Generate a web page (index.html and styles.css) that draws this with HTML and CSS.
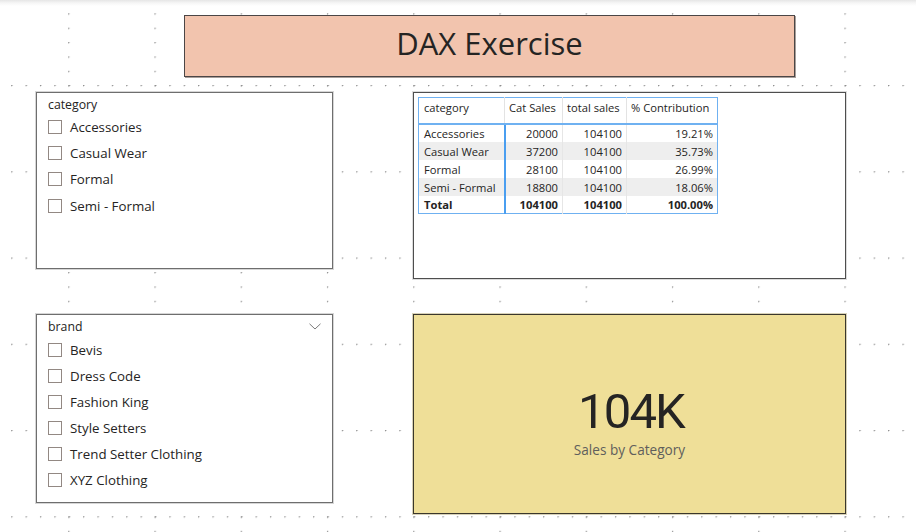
FILE: index.html
```html
<!DOCTYPE html>
<html>
<head>
<meta charset="utf-8">
<link rel="stylesheet" href="styles.css">
</head>
<body>
<div class="canvas">
  <div class="title-row">
    <div class="title">DAX Exercise</div>
  </div>

  <div class="row row-2">
    <div class="slicer slicer-category">
      <div class="slicer-head"><span>category</span></div>
      <ul class="items">
        <li><span class="cb"></span>Accessories</li>
        <li><span class="cb"></span>Casual Wear</li>
        <li><span class="cb"></span>Formal</li>
        <li><span class="cb"></span>Semi - Formal</li>
      </ul>
    </div>

    <div class="visual table-visual">
      <table class="matrix">
        <colgroup>
          <col class="c1"><col class="c2"><col class="c3"><col class="c4">
        </colgroup>
        <thead>
          <tr><th class="l">category</th><th>Cat Sales</th><th>total sales</th><th>% Contribution</th></tr>
        </thead>
        <tbody>
          <tr><td class="l">Accessories</td><td class="sep">20000</td><td>104100</td><td>19.21%</td></tr>
          <tr class="alt"><td class="l">Casual Wear</td><td class="sep">37200</td><td>104100</td><td>35.73%</td></tr>
          <tr><td class="l">Formal</td><td class="sep">28100</td><td>104100</td><td>26.99%</td></tr>
          <tr class="alt"><td class="l">Semi - Formal</td><td class="sep">18800</td><td>104100</td><td>18.06%</td></tr>
          <tr class="total"><td class="l">Total</td><td class="sep">104100</td><td>104100</td><td>100.00%</td></tr>
        </tbody>
      </table>
    </div>
  </div>

  <div class="row row-3">
    <div class="slicer slicer-brand">
      <div class="slicer-head"><span>brand</span>
        <svg class="chev" width="12" height="7" viewBox="0 0 12 7"><path d="M0.5 0.8 L6 6 L11.5 0.8" fill="none" stroke="#7a7a7a" stroke-width="1"/></svg>
      </div>
      <ul class="items">
        <li><span class="cb"></span>Bevis</li>
        <li><span class="cb"></span>Dress Code</li>
        <li><span class="cb"></span>Fashion King</li>
        <li><span class="cb"></span>Style Setters</li>
        <li><span class="cb"></span>Trend Setter Clothing</li>
        <li><span class="cb"></span>XYZ Clothing</li>
      </ul>
    </div>

    <div class="visual card">
      <div class="card-value">104K</div>
      <div class="card-label">Sales by Category</div>
    </div>
  </div>
</div>
</body>
</html>
```

FILE: styles.css
```css
* { box-sizing: border-box; }
html, body { margin: 0; padding: 0; background: #fff; }
body {
  font-family: "Open Sans", "Noto Sans", sans-serif;
  color: #252423;
}
.canvas {
  width: 916px;
  height: 532px;
  overflow: hidden;
  padding-top: 15px;
  display: flex;
  flex-direction: column;
  background-color: #fff;
  background-image:
    linear-gradient(to bottom, #e6e6e6 0px, #f6f6f6 3px, rgba(255,255,255,0) 6px),
    radial-gradient(circle at 0.5px 0.5px, #8c8c8c 0.7px, rgba(140,140,140,0) 1.1px),
    radial-gradient(circle at 0.5px 0.5px, #8c8c8c 0.7px, rgba(140,140,140,0) 1.1px);
  background-size: 916px 6px, 14.375px 86.25px, 86.25px 14.375px;
  background-repeat: no-repeat, repeat, repeat;
  background-position: 0 0, 11.2px 85px, 68.2px 13.3px;
}
.title-row { display: flex; padding-left: 184px; }
.title {
  width: 611px;
  height: 62px;
  background: #f2c4ae;
  border: 1px solid #4b4646;
  box-shadow: 1px 1px 0 #a89f9b;
  display: flex;
  align-items: center;
  justify-content: center;
  font-size: 31px;
  color: #252423;
  padding-bottom: 6px;
}
.row { display: flex; padding-left: 36px; gap: 80px; align-items: flex-start; }
.row-2 { margin-top: 15px; }
.row-3 { margin-top: 35px; }

.slicer {
  width: 297px;
  background: #fff;
  border: 1px solid #6e6e6e;
  box-shadow: 0 0 0 1px #d6d6d6;
  padding: 3px 11px 0 11px;
}
.slicer-category { height: 177px; }
.slicer-brand { height: 189px; }
.slicer-head {
  height: 18px;
  font-size: 12.3px;
  line-height: 18px;
  display: flex;
  justify-content: space-between;
  align-items: center;
}
.chev { margin-right: 0px; margin-top: -2px; }
.items { list-style: none; margin: 1px 0 0 0; padding: 0; }
.items li {
  height: 26.3px;
  display: flex;
  align-items: center;
  font-size: 13.3px;
  padding-bottom: 3px;
}
.slicer-brand .items { margin-top: 2px; }
.slicer-brand .items li { height: 26px; }
.cb {
  width: 14px;
  height: 14px;
  border: 1px solid #928883;
  margin-right: 8px;
  flex: none;
  background: #fff;
}

.visual {
  width: 433px;
  border: 1px solid #4e4e4e;
  box-shadow: 0 0 0 1px #dcdcdc;
}
.table-visual {
  height: 187px;
  background: #fff;
  padding: 4px;
}
.matrix {
  border-collapse: collapse;
  table-layout: fixed;
  width: 299px;
  border: 1px solid #6fb1f1;
  font-size: 11.2px;
  color: #252423;
}
.c1 { width: 86px; } .c2 { width: 58px; } .c3 { width: 64px; } .c4 { width: 91px; }
.matrix th {
  height: 26px;
  font-weight: 400;
  text-align: left;
  padding: 0 4px 5px 4px;
  border-left: 1px solid #e3e3e3;
  border-bottom: 2px solid #6fb1f1;
  white-space: nowrap;
}
.matrix th.l { padding-left: 5px; border-left: none; }
.matrix td {
  height: 18px;
  padding: 1px 4px 0 4px;
  text-align: right;
  border-left: 1px solid #e6e6e6;
  white-space: nowrap;
}
.matrix td.l { text-align: left; padding-left: 5px; border-left: none; }
.matrix td.sep { border-left: 2px solid #4a9ef0; }
.matrix tr.alt td { background: #eeeeee; }
.matrix tr.total td { font-weight: 700; }

.card {
  height: 200px;
  background: #efdf98;
  border: 1px solid #3a372c;
  box-shadow: 0 0 0 1px #d8d2b8;
  display: flex;
  flex-direction: column;
  align-items: center;
  justify-content: center;
  padding-top: 16px;
}
.card-value {
  font-family: Roboto, "DejaVu Sans", sans-serif;
  font-size: 49px;
  line-height: 52px;
  letter-spacing: -1.8px;
  color: #252423;
  margin-left: 3px;
}
.card-label {
  font-size: 13.6px;
  color: #605e5c;
  margin-top: 2px;
}
```
